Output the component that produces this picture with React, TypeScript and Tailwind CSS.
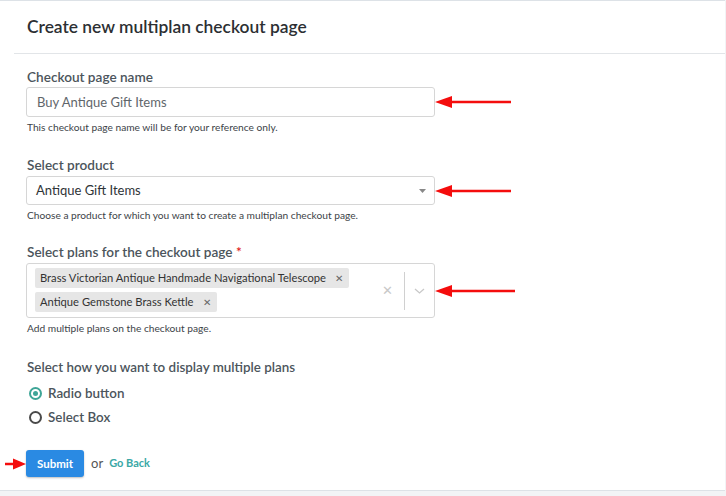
import React from 'react'

const Arrow = ({ width }: { width: number }) => (
  <svg width={width} height="14" viewBox={`0 0 ${width} 14`} className="shrink-0">
    <line x1="14" y1="7" x2={width} y2="7" stroke="#f40d0d" strokeWidth="2.5" strokeLinecap="round" />
    <polygon points="0,7 17,1 17,13" fill="#f40d0d" />
  </svg>
)

const Tag = ({ label }: { label: string }) => (
  <span className="inline-flex items-center h-[20px] bg-[#e6e6e6] rounded-[2px] pl-[5px] pr-[6px] text-[11.2px] text-[#333]">
    {label}
    <span className="ml-[9px] text-[10px] text-[#666]">✕</span>
  </span>
)

const App = () => {
  return (
    <div className="w-[726px] h-[496px] bg-[#f2f4f6] font-['Lato',sans-serif] overflow-hidden">
      <div className="h-[491px] bg-white border-t border-[#dde2e7] border-b border-b-[#dde2e7] mr-[1px]">
        <div className="ml-[14px] h-[53px] border-b border-[#e2e5e8] flex items-center pl-[13px]">
          <h1 className="text-[17.4px] font-semibold text-[#2c2f33]">Create new multiplan checkout page</h1>
        </div>

        <form className="pl-[26px] pt-[14px]">
          <div className="flex flex-col">
            <label htmlFor="pageName" className="text-[13.6px] font-semibold text-[#4c555c] leading-[18px] ml-[1px]">
              Checkout page name
            </label>
            <div className="flex items-center mt-[1px]">
              <input
                id="pageName"
                type="text"
                defaultValue="Buy Antique Gift Items"
                className="w-[409px] h-[30px] border border-[#d6d6d6] rounded-[3px] px-[10px] text-[13px] text-[#5f666b] outline-none"
              />
              <Arrow width={76} />
            </div>
            <p className="text-[10.2px] leading-[12px] text-[#3d4348] mt-[4px] ml-[1px]">
              This checkout page name will be for your reference only.
            </p>
          </div>

          <div className="flex flex-col mt-[23px]">
            <label className="text-[13.6px] font-semibold text-[#4c555c] leading-[18px] ml-[1px]">Select product</label>
            <div className="flex items-center mt-[2px]">
              <div className="w-[409px] h-[29px] border border-[#d6d6d6] rounded-[3px] pl-[9px] pr-[8px] flex items-center justify-between">
                <span className="text-[13px] text-[#2f3438]">Antique Gift Items</span>
                <svg width="7" height="4" viewBox="0 0 7 4">
                  <polygon points="0,0 7,0 3.5,4" fill="#888" />
                </svg>
              </div>
              <Arrow width={76} />
            </div>
            <p className="text-[10.2px] leading-[12px] text-[#3d4348] mt-[4px] ml-[1px]">
              Choose a product for which you want to create a multiplan checkout page.
            </p>
          </div>

          <div className="flex flex-col mt-[22px]">
            <label className="text-[13.6px] font-semibold text-[#4c555c] leading-[18px] ml-[1px]">
              Select plans for the checkout page <span className="text-[#e0211c]">*</span>
            </label>
            <div className="flex items-center mt-[2px]">
              <div className="w-[409px] h-[55px] border border-[#d6d6d6] rounded-[3px] flex">
                <div className="flex-1 flex flex-col items-start gap-[4px] pl-[8px] pt-[4px]">
                  <Tag label="Brass Victorian Antique Handmade Navigational Telescope" />
                  <Tag label="Antique Gemstone Brass Kettle" />
                </div>
                <div className="flex items-center">
                  <span className="text-[13px] text-[#c8c8c8] w-[20px] text-center mr-[7px]">✕</span>
                  <span className="w-px h-[38px] bg-[#d0d0d0]" />
                  <svg width="29" height="10" viewBox="0 0 29 10">
                    <polyline points="10,3 14.5,7 19,3" fill="none" stroke="#c8c8c8" strokeWidth="1.3" />
                  </svg>
                </div>
              </div>
              <Arrow width={80} />
            </div>
            <p className="text-[10.2px] leading-[12px] text-[#3d4348] mt-[4px] ml-[1px]">
              Add multiple plans on the checkout page.
            </p>
          </div>

          <div className="flex flex-col mt-[24px]">
            <span className="text-[13.4px] font-semibold text-[#4c555c] leading-[18px] ml-[1px]">
              Select how you want to display multiple plans
            </span>
            <label className="flex items-center h-[18px] gap-[6px] mt-[8px] ml-[3px]">
              <span className="w-[13px] h-[13px] rounded-full border-2 border-[#3ea597] flex items-center justify-center">
                <span className="w-[5px] h-[5px] rounded-full bg-[#3ea597]" />
              </span>
              <span className="text-[13.4px] font-semibold text-[#4c555c]">Radio button</span>
            </label>
            <label className="flex items-center h-[18px] gap-[6px] mt-[6px] ml-[3px]">
              <span className="w-[13px] h-[13px] rounded-full border-2 border-[#4a4a4a]" />
              <span className="text-[13.4px] font-semibold text-[#4c555c]">Select Box</span>
            </label>
          </div>

          <div className="flex items-center mt-[24px] -ml-[21px]">
            <svg width="21" height="12" viewBox="0 0 21 12" className="shrink-0">
              <line x1="0" y1="6" x2="10" y2="6" stroke="#f40d0d" strokeWidth="2.5" />
              <polygon points="21,6 8,0.5 8,11.5" fill="#f40d0d" />
            </svg>
            <button
              type="button"
              className="h-[27px] px-[11px] bg-[#2a8ae3] rounded-[3px] text-white text-[11.5px] font-bold shadow-[0_1px_2px_rgba(0,0,0,0.25)]"
            >
              Submit
            </button>
            <span className="ml-[7px] text-[13px] text-[#555]">or</span>
            <a className="ml-[6px] text-[11px] font-bold text-[#3aa8a6]">Go Back</a>
          </div>
        </form>
      </div>
    </div>
  )
}

export default App
